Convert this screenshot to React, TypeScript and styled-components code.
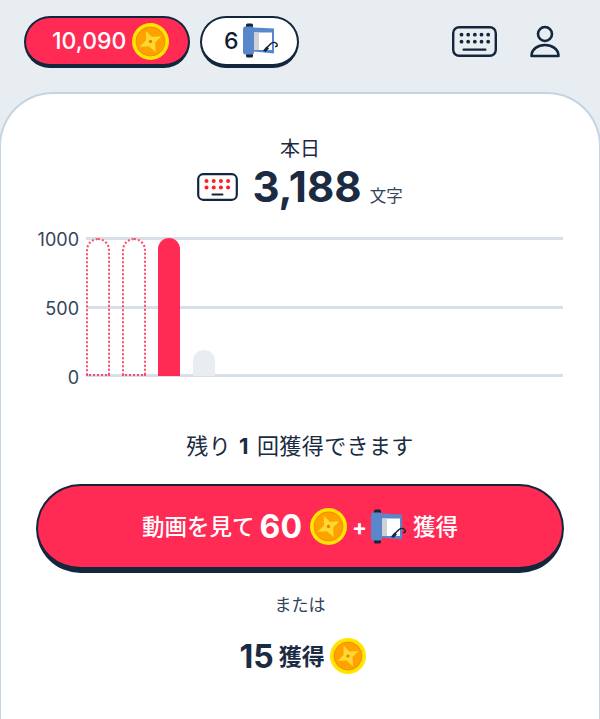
import React from "react";
import styled, { createGlobalStyle } from "styled-components";

const Global = createGlobalStyle`
  html, body { margin: 0; padding: 0; height: 719px; overflow: hidden; background: #e8edf2; }
  * { box-sizing: border-box; }
  body { font-family: Inter, "Noto Sans CJK JP", sans-serif; color: #1a2b42; }
`;

const Page = styled.div`
  width: 600px;
  height: 719px;
  display: flex;
  flex-direction: column;
  overflow: hidden;
`;

const Header = styled.header`
  height: 92px;
  flex: none;
  padding: 16px 40px 0 24px;
  display: flex;
  align-items: flex-start;
`;

const Pill = styled.div<{ $red?: boolean; $w: number; $left: number; $gap: number }>`
  width: ${(p) => p.$w}px;
  height: 52px;
  border-radius: 26px;
  border: 2px solid #13263c;
  border-bottom-width: 4px;
  background: ${(p) => (p.$red ? "#ff2b55" : "#ffffff")};
  color: ${(p) => (p.$red ? "#ffffff" : "#101c2e")};
  display: flex;
  align-items: center;
  gap: ${(p) => p.$gap}px;
  padding-left: ${(p) => p.$left}px;
  font-size: 23px;
  font-weight: 500;
  margin-right: 10px;
`;

const HeaderRight = styled.div`
  margin-left: auto;
  display: flex;
  align-items: center;
  gap: 33px;
  height: 50px;
`;

const Card = styled.main`
  flex: 1;
  background: #fff;
  border: 2px solid #c5d4e3;
  border-bottom: none;
  border-radius: 54px 54px 0 0;
  margin: 0 -1px;
  display: flex;
  flex-direction: column;
  align-items: center;
  padding-top: 42px;
`;

const Today = styled.div`
  font-size: 20px;
  line-height: 26px;
  color: #1a2b42;
`;

const Total = styled.div`
  display: flex;
  align-items: center;
  height: 50px;
`;

const TotalNum = styled.span`
  font-size: 42px;
  font-weight: 700;
  color: #1a2b42;
  margin-left: 14px;
  line-height: 50px;
`;

const TotalUnit = styled.span`
  font-size: 16.5px;
  color: #33445a;
  margin-left: 8px;
  align-self: flex-end;
  line-height: 26px;
  margin-bottom: 3px;
`;

const Chart = styled.div`
  align-self: stretch;
  margin-top: 25px;
  padding: 0 36px 0 35px;
  display: flex;
  height: 140px;
`;

const Axis = styled.div`
  width: 43px;
  height: 158px;
  margin-top: -7px;
  display: flex;
  flex-direction: column;
  justify-content: space-between;
  align-items: flex-end;
  font-size: 18px;
  line-height: 20px;
  color: #33445a;
`;

const Plot = styled.div`
  flex: 1;
  margin-left: 7px;
  height: 140px;
  display: grid;
`;

const Lines = styled.div`
  grid-area: 1 / 1;
  display: flex;
  flex-direction: column;
  justify-content: space-between;
`;

const Line = styled.div`
  height: 3px;
  background: #d8dfe6;
`;

const Bars = styled.div`
  grid-area: 1 / 1;
  display: flex;
  align-items: flex-end;
  gap: 12px;
  height: 139px;
`;

const Bar = styled.div<{ $kind: "dotted" | "solid" | "ghost" }>`
  width: ${(p) => (p.$kind === "dotted" ? 24 : 22)}px;
  border-radius: 12px 12px 0 0;
  background: ${(p) =>
    p.$kind === "solid" ? "#ff2b55" : p.$kind === "ghost" ? "#e8edf2" : "transparent"};
  border: ${(p) => (p.$kind === "dotted" ? "2px dotted #ff4a6e" : "none")};
  margin-right: ${(p) => (p.$kind === "solid" ? 1 : 0)}px;
`;

const Remaining = styled.div`
  margin-top: 54px;
  font-size: 22px;
  line-height: 30px;
  letter-spacing: 0.4px;
  color: #1a2b42;
  b { font-weight: 700; margin: 0 8px; }
`;

const WatchButton = styled.button`
  margin-top: 23px;
  width: 528px;
  height: 89px;
  flex: none;
  border-radius: 45px;
  border: 2px solid #13263c;
  border-bottom-width: 6px;
  background: #ff2b55;
  color: #fff;
  display: flex;
  align-items: center;
  justify-content: center;
  font-family: inherit;
  font-size: 22.5px;
  font-weight: 500;
  padding: 0;
`;

const CjkLabel = styled.span<{ $left?: number }>`
  margin-left: ${(p) => p.$left ?? 0}px;
  margin-bottom: 3px;
`;

const Big = styled.span`
  font-size: 32px;
  font-weight: 700;
  margin: 0 8px 0 5px;
`;

const Plus = styled.span`
  font-size: 22px;
  font-weight: 700;
  margin: 0 4px 0 5px;
`;

const Or = styled.div`
  margin-top: 20px;
  font-size: 17px;
  line-height: 24px;
  color: #33445a;
`;

const Reward = styled.div`
  margin-top: 19px;
  display: flex;
  align-items: center;
  gap: 5px;
  height: 40px;
  padding-left: 5px;
  color: #1a2b42;
  font-size: 23px;
  font-weight: 700;
`;

const RewardNum = styled.span`
  font-size: 32px;
`;

const Svg = styled.svg`
  flex: none;
  display: block;
`;

const Coin = ({ size }: { size: number }) => (
  <Svg width={size} height={size} viewBox="0 0 36 36">
    <circle cx="18" cy="18" r="18" fill="#ffe600" />
    <circle cx="18" cy="18" r="14" fill="#ffa200" stroke="#f59000" strokeWidth="1" />
    <path
      d="M13.5 7.5 L19.5 13.5 L28.5 13 L22.5 19 L23 28.5 L16.5 22.5 L7.5 23 L13.5 17 Z"
      fill="#ffd92e"
      strokeLinejoin="round"
    />
    <circle cx="18" cy="18" r="1.6" fill="#e57f00" />
  </Svg>
);

const ScrollIcon = ({ h }: { h: number }) => (
  <Svg width={h} height={h} viewBox="0 0 36 35">
    <rect x="3" y="0" width="7" height="4.5" rx="1.5" fill="#13263c" />
    <rect x="3" y="29.5" width="7" height="4.5" rx="1.5" fill="#13263c" />
    <path d="M10 4 L31 5 L31 30 L10 28 Z" fill="#5a86cb" />
    <rect x="11" y="9" width="18" height="17.5" fill="#ffffff" />
    <rect x="11" y="9" width="5" height="17.5" fill="#cfd2d4" />
    <rect x="0" y="3" width="11" height="28" rx="2.5" fill="#5a86cb" />
    <path
      d="M23 25 L26 22 C28 19.5 31 18 33 19.5 C35 21 34.5 23.5 32 23"
      fill="none"
      stroke="#13263c"
      strokeWidth="1.5"
    />
    <path d="M20 27 L23.5 23 L26 25 L22.5 28.5 Z" fill="#13263c" />
  </Svg>
);

const HeaderKeyboard = () => (
  <Svg width="45" height="31" viewBox="0 0 45 31">
    <rect x="1.2" y="1.2" width="42.6" height="28.6" rx="6" fill="none" stroke="#13263c" strokeWidth="2.4" />
    {[0, 1].map((r) =>
      [0, 1, 2, 3, 4].map((c) => (
        <circle key={`${r}${c}`} cx={9.5 + c * 6.67} cy={8.7 + r * 7} r="1.9" fill="#13263c" />
      ))
    )}
    <rect x="10.5" y="22.4" width="24" height="2.4" rx="1" fill="#13263c" />
  </Svg>
);

const RedKeyboard = () => (
  <Svg width="41" height="28" viewBox="0 0 41 28">
    <rect x="1.2" y="1.2" width="38.6" height="25.6" rx="5" fill="#fff" stroke="#13263c" strokeWidth="2.2" />
    {[0, 1].map((r) =>
      [0, 1, 2, 3].map((c) => (
        <circle key={`${r}${c}`} cx={9.5 + c * 7.2} cy={8 + r * 6.6} r="2" fill="#ff1f1f" />
      ))
    )}
    <rect x="14.5" y="20.5" width="12" height="2" rx="1" fill="#13263c" />
  </Svg>
);

const User = () => (
  <Svg width="30" height="33" viewBox="0 0 30 33">
    <circle cx="15" cy="9" r="7" fill="none" stroke="#13263c" strokeWidth="2.6" />
    <path
      d="M1.5 31 C1.5 24 8 20 15 20 C22 20 28.5 24 28.5 31 Z"
      fill="none"
      stroke="#13263c"
      strokeWidth="2.6"
      strokeLinejoin="round"
    />
  </Svg>
);

const barData: { kind: "dotted" | "solid" | "ghost"; h: number }[] = [
  { kind: "dotted", h: 138 },
  { kind: "dotted", h: 138 },
  { kind: "solid", h: 138 },
  { kind: "ghost", h: 26 },
];

export default function App() {
  return (
    <Page>
      <Global />
      <Header>
        <Pill $red $w={166} $left={26} $gap={6}>
          10,090
          <Coin size={37} />
        </Pill>
        <Pill $w={99} $left={22} $gap={4}>
          6
          <ScrollIcon h={36} />
        </Pill>
        <HeaderRight>
          <HeaderKeyboard />
          <User />
        </HeaderRight>
      </Header>
      <Card>
        <Today>本日</Today>
        <Total>
          <RedKeyboard />
          <TotalNum>3,188</TotalNum>
          <TotalUnit>文字</TotalUnit>
        </Total>
        <Chart>
          <Axis>
            <span>1000</span>
            <span>500</span>
            <span>0</span>
          </Axis>
          <Plot>
            <Lines>
              <Line />
              <Line />
              <Line />
            </Lines>
            <Bars>
              {barData.map((b, i) => (
                <Bar key={i} $kind={b.kind} style={{ height: b.h }} />
              ))}
            </Bars>
          </Plot>
        </Chart>
        <Remaining>
          残り<b>1</b>回獲得できます
        </Remaining>
        <WatchButton>
          <CjkLabel>動画を見て</CjkLabel>
          <Big>60</Big>
          <Coin size={37} />
          <Plus>+</Plus>
          <ScrollIcon h={36} />
          <CjkLabel $left={6}>獲得</CjkLabel>
        </WatchButton>
        <Or>または</Or>
        <Reward>
          <RewardNum>15</RewardNum>
          <CjkLabel>獲得</CjkLabel>
          <Coin size={36} />
        </Reward>
      </Card>
    </Page>
  );
}
